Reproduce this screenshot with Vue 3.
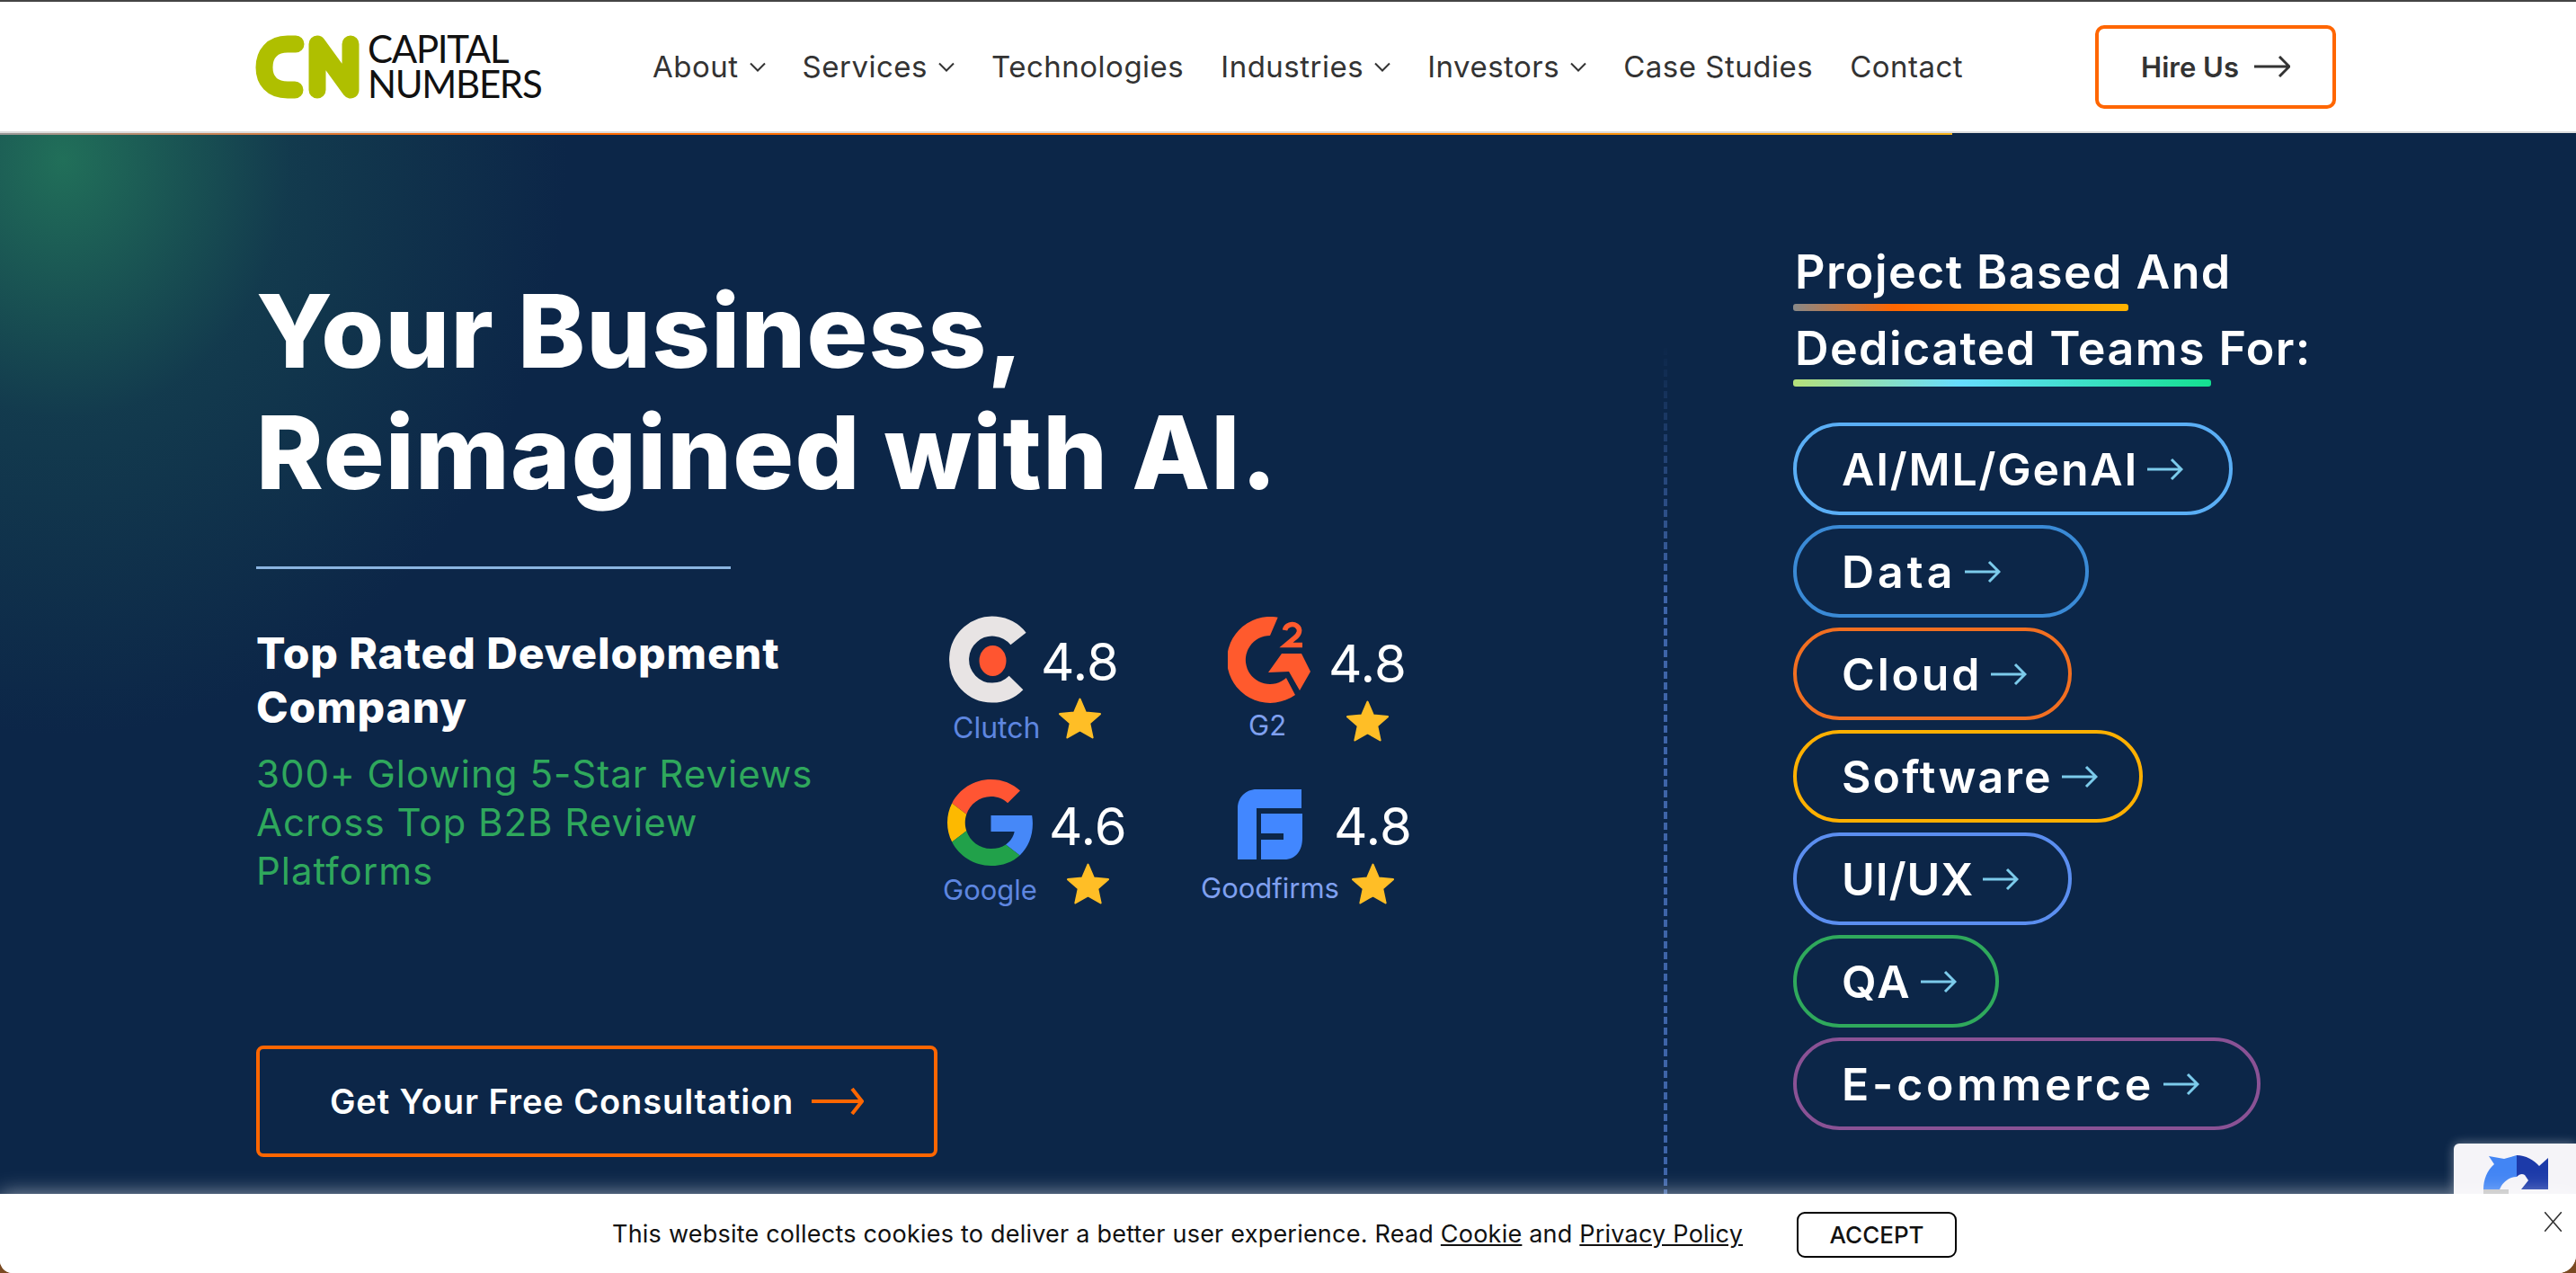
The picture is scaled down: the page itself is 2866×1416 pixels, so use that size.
<template>
  <div class="page">
    <header class="header">
      <a class="logo">
        <svg class="logo-mark" viewBox="0 0 116 71" width="116" height="71" aria-hidden="true">
          <path d="M45 10H36C18 10 10 22 10 36S18 61 36 61H44" fill="none" stroke="#afbf00" stroke-width="19" stroke-linecap="round" />
          <path d="M69 61V10L106 61V10" fill="none" stroke="#afbf00" stroke-width="19" stroke-linecap="round" stroke-linejoin="round" />
        </svg>
        <div class="logo-text">
          <span>CAPITAL</span>
          <span>NUMBERS</span>
        </div>
      </a>
      <nav class="nav">
        <a v-for="item in navItems" :key="item.name" class="nav-item">
          {{ item.name }}
          <svg v-if="item.menu" viewBox="0 0 18 11" width="18" height="11" aria-hidden="true">
            <path d="M1 1.5L9 9.5L17 1.5" fill="none" stroke="#333" stroke-width="2" />
          </svg>
        </a>
      </nav>
      <a class="hire">
        Hire Us
        <svg viewBox="0 0 40 24" width="40" height="24" aria-hidden="true">
          <path d="M0 12H38M28 1L39 12L28 23" fill="none" stroke="#333" stroke-width="3" />
        </svg>
      </a>
    </header>

    <main class="hero">
      <div class="progress"></div>
      <section class="left">
        <h1>Your Business,<br />Reimagined with AI.</h1>
        <div class="rule"></div>
        <div class="proof">
          <div class="proof-text">
            <h2>Top Rated Development Company</h2>
            <p>300+ Glowing 5-Star Reviews<br />Across Top B2B Review<br />Platforms</p>
          </div>
          <div class="ratings">
            <div v-for="r in ratings" :key="r.name" class="rating" :class="'r-' + r.key">
              <div class="brand">
                <svg v-if="r.key === 'clutch'" class="mark" viewBox="0 0 89 97" width="89" height="97" aria-hidden="true">
                  <path d="M77 25.5A37 37 0 1 0 74.5 74.5" fill="none" stroke="#e8e4e4" stroke-width="22" />
                  <ellipse cx="48.5" cy="50" rx="15" ry="17" fill="#ff5530" />
                </svg>
                <svg v-else-if="r.key === 'g2'" class="mark" viewBox="0 0 92 96" width="92" height="96" aria-hidden="true">
                  <path d="M55.7 .7A48 48 0 1 0 75 87L65 68A27 27 0 1 1 47 21Z" fill="#ff5a2d" />
                  <path d="M63.5 15C64.500 9 72 7 76.500 10C82 14 79.500 20 74 24L65 31.500H83" fill="none" stroke="#ff5a2d" stroke-width="5.500" />
                  <path d="M45 62L60 41H82L92 61L80 82L68 61Z" fill="#ff5a2d" />
                </svg>
                <svg v-else-if="r.key === 'google'" class="mark" viewBox="0 0 48 48" width="97" height="96" preserveAspectRatio="none" aria-hidden="true">
                  <path fill="#ff5533" d="M24 9.5c3.54 0 6.71 1.22 9.21 3.6l6.85-6.85C35.9 2.38 30.47 0 24 0 14.62 0 6.51 5.38 2.56 13.22l7.98 6.19C12.43 13.72 17.74 9.5 24 9.5z" />
                  <path fill="#4688f8" d="M46.98 24.55c0-1.57-.15-3.09-.38-4.55H24v9.02h12.94c-.58 2.96-2.26 5.48-4.78 7.18l7.73 6c4.51-4.18 7.09-10.36 7.09-17.65z" />
                  <path fill="#fdb900" d="M10.53 28.59c-.48-1.45-.76-2.99-.76-4.59s.27-3.14.76-4.59l-7.98-6.19C.92 16.46 0 20.12 0 24c0 3.88.92 7.54 2.56 10.78l7.97-6.19z" />
                  <path fill="#21a14a" d="M24 48c6.48 0 11.93-2.13 15.89-5.81l-7.73-6c-2.15 1.45-4.92 2.3-8.16 2.3-6.26 0-11.57-4.22-13.47-9.91l-7.98 6.19C6.51 42.62 14.62 48 24 48z" />
                </svg>
                <svg v-else class="mark" viewBox="0 0 72 78" width="72" height="78" aria-hidden="true">
                  <path d="M0 78V21C0 9 9 0 21 0H71V21H21V78Z" fill="#4287ff" />
                  <path d="M26 27H72V54C72 68 65 78 52 78H26V56H51V49H26Z" fill="#4287ff" />
                </svg>
                <span class="brand-name">{{ r.name }}</span>
              </div>
              <div class="score">
                <span class="num">{{ r.score }}</span>
                <svg class="star" viewBox="1 1.500 22 21" width="47" height="46" aria-hidden="true">
                  <path d="M12 2L15 9L22.500 9.700L17 14.600L18.600 22L12 18.200L5.400 22L7 14.600L1.500 9.700L9 9Z" fill="#ffbe26" stroke="#ffbe26" stroke-width="1" stroke-linejoin="round" />
                </svg>
              </div>
            </div>
          </div>
        </div>
        <a class="cta">
          Get Your Free Consultation
          <svg viewBox="0 0 58 30" width="58" height="30" aria-hidden="true">
            <path d="M0 15H56M45 1L56 15L45 29" fill="none" stroke="#ff6600" stroke-width="4" />
          </svg>
        </a>
      </section>

      <div class="dash"></div>

      <section class="right">
        <div class="team-title">Project Based And</div>
        <div class="bar bar-warm"></div>
        <div class="team-title second">Dedicated Teams For:</div>
        <div class="bar bar-cool"></div>
        <ul class="pills">
          <li
            v-for="pill in pills"
            :key="pill.name"
            class="pill"
            :style="{ width: pill.width + 'px', borderColor: pill.color, letterSpacing: pill.track + 'px' }"
          >
            {{ pill.name }}
            <svg viewBox="0 0 40 26" width="40" height="26" aria-hidden="true">
              <path d="M0 13H38M27 2L38 13L27 24" fill="none" stroke="#7ccbeb" stroke-width="3" />
            </svg>
          </li>
        </ul>
      </section>

      <div class="recaptcha">
        <svg viewBox="0 0 74 44" width="74" height="44" aria-hidden="true">
          <path d="M0 38C0 27 4 17 12 10L6 1L23 4L37 0V24C30 24 24 28 20 34L18 38Z" fill="#4285f4" />
          <path d="M37 0C47 0 56 5 62 12L72 3V38H42L50 28L46 22C43 20 40 21 37 24Z" fill="#1c3aa9" />
          <rect y="38" width="28" height="6" fill="#c4c4c4" />
        </svg>
      </div>
    </main>

    <footer class="cookie">
      <p>
        This website collects cookies to deliver a better user experience. Read
        <a>Cookie</a> and <a>Privacy Policy</a>
      </p>
      <button class="accept">ACCEPT</button>
      <svg class="close" viewBox="0 0 19 22" width="19" height="22" aria-hidden="true">
        <path d="M0 0L19 22M19 0L0 22" fill="none" stroke="#333" stroke-width="1.500" />
      </svg>
    </footer>
  </div>
</template>

<script setup>
const navItems = [
  { name: "About", menu: true },
  { name: "Services", menu: true },
  { name: "Technologies", menu: false },
  { name: "Industries", menu: true },
  { name: "Investors", menu: true },
  { name: "Case Studies", menu: false },
  { name: "Contact", menu: false },
];

const ratings = [
  { key: "clutch", name: "Clutch", score: "4.8" },
  { key: "g2", name: "G2", score: "4.8" },
  { key: "google", name: "Google", score: "4.6" },
  { key: "goodfirms", name: "Goodfirms", score: "4.8" },
];

const pills = [
  { name: "AI/ML/GenAI", width: 489, color: "#5aaef5", track: 1.8 },
  { name: "Data", width: 329, color: "#3a8ad6", track: 4 },
  { name: "Cloud", width: 310, color: "#f26f21", track: 2.8 },
  { name: "Software", width: 389, color: "#ffb000", track: 2.1 },
  { name: "UI/UX", width: 310, color: "#5b8ef0", track: 1 },
  { name: "QA", width: 229, color: "#2fa95c", track: 2.5 },
  { name: "E-commerce", width: 520, color: "#8a5295", track: 3.8 },
];
</script>

<style>
html,
body {
  margin: 0;
  background: #7a4a22;
}
</style>

<style scoped>
.page {
  width: 2866px;
  height: 1416px;
  display: flex;
  flex-direction: column;
  overflow: hidden;
  border-radius: 0 0 20px 14px;
  background: #fff;
  font-family: Inter, "Liberation Sans", sans-serif;
}

.header {
  height: 148px;
  box-sizing: border-box;
  flex-shrink: 0;
  display: flex;
  align-items: center;
  padding: 0 267px 0 284px;
  background: #fff;
  border-top: 2px solid #444;
  border-bottom: 2px solid #ddd;
}

.logo {
  width: 319px;
  flex-shrink: 0;
  display: flex;
  align-items: center;
  gap: 9px;
}

.logo-mark {
  flex-shrink: 0;
}

.logo-text {
  display: flex;
  flex-direction: column;
  font-family: Lato, sans-serif;
  font-size: 42px;
  letter-spacing: -1.3px;
  line-height: 39px;
  color: #111;
}

.nav {
  display: flex;
  align-items: center;
  gap: 41px;
  margin-left: 123px;
  font-size: 33px;
  letter-spacing: 0.5px;
  color: #333;
}

.nav-item {
  display: flex;
  align-items: center;
  gap: 12px;
}

.hire {
  margin-left: auto;
  width: 268px;
  height: 93px;
  box-sizing: border-box;
  display: flex;
  align-items: center;
  justify-content: center;
  gap: 17px;
  border: 4px solid #ff6600;
  border-radius: 10px;
  font-size: 31px;
  font-weight: 600;
  color: #333;
}

.hero {
  position: relative;
  flex: 1;
  min-height: 0;
  display: flex;
  background:
    radial-gradient(ellipse 560px 640px at 70px 30px, rgba(34, 115, 90, 0.95), rgba(24, 75, 82, 0.55) 45%, rgba(12, 38, 72, 0) 100%),
    #0c2648;
  color: #fff;
}

.progress {
  position: absolute;
  left: 0;
  top: 0;
  width: 2172px;
  height: 2px;
  background: linear-gradient(90deg, #999 0%, #ff6600 25%, #ff7a00 70%, #f5b21a 100%);
}

.left {
  width: 1851px;
  flex-shrink: 0;
  box-sizing: border-box;
  padding: 153px 0 0 285px;
}

h1 {
  margin: 0;
  font-size: 113px;
  line-height: 135px;
  font-weight: 800;
  letter-spacing: 1.2px;
}

.rule {
  width: 528px;
  height: 3px;
  margin-top: 59px;
  background: #8ab4e0;
}

.proof {
  display: flex;
  margin-top: 52px;
}

.proof-text {
  width: 764px;
  flex-shrink: 0;
  padding-top: 12px;
}

h2 {
  width: 640px;
  margin: 0;
  font-size: 48px;
  line-height: 60px;
  font-weight: 800;
  letter-spacing: 0.9px;
}

.proof-text p {
  margin: 17px 0 0;
  font-size: 42px;
  line-height: 54px;
  letter-spacing: 1px;
  color: #2fa85c;
}

.ratings {
  display: grid;
  grid-template-columns: 287px 200px;
  grid-auto-rows: 182px;
}

.rating {
  display: flex;
  align-items: flex-start;
}

.brand {
  display: flex;
  flex-direction: column;
  flex-shrink: 0;
}

.brand-name {
  font-size: 31px;
  line-height: 40px;
  white-space: nowrap;
}

.score {
  display: flex;
  flex-direction: column;
  align-items: center;
}

.num {
  font-size: 58px;
  line-height: 60px;
}

.r-clutch .brand { width: 109px; }
.r-clutch .mark { margin-left: 7px; }
.r-clutch .brand-name { margin: 8px 0 0 11px; font-size: 32px; color: #5e86e0; }
.r-clutch .score { margin-top: 21px; }
.r-clutch .star { margin-top: 10px; }

.r-g2 .brand { width: 142px; }
.r-g2 .mark { margin: 1px 0 0 30px; }
.r-g2 .brand-name { margin: 5px 0 0 53px; color: #7fa0f0; }
.r-g2 .score { margin-top: 23px; }
.r-g2 .star { margin-top: 11px; }

.r-google .brand { width: 118px; }
.r-google .mark { margin-left: 5px; }
.r-google .brand-name { margin-top: 7px; color: #5e86e0; }
.r-google .score { margin-top: 22px; }
.r-google .star { margin-top: 11px; }

.r-goodfirms .brand { width: 148px; }
.r-goodfirms .mark { margin: 11px 0 0 41px; }
.r-goodfirms .brand-name { margin-top: 12px; color: #7fa0f0; }
.r-goodfirms .score { margin-top: 22px; }
.r-goodfirms .star { margin-top: 11px; }

.cta {
  width: 758px;
  height: 124px;
  box-sizing: border-box;
  display: flex;
  align-items: center;
  gap: 20px;
  margin-top: 114px;
  padding-left: 78px;
  border: 4px solid #ff6600;
  border-radius: 8px;
  font-size: 38px;
  font-weight: 600;
  letter-spacing: 0.9px;
}

.dash {
  width: 4px;
  flex-shrink: 0;
  margin-top: 235px;
  background:
    repeating-linear-gradient(180deg, #0c2648 0 4px, transparent 4px 12px),
    linear-gradient(180deg, #0c2648, #3e64a8 30%);
}

.right {
  margin-left: 140px;
  padding-top: 125px;
}

.team-title {
  font-size: 52px;
  line-height: 60px;
  font-weight: 600;
  letter-spacing: 1.4px;
  padding-left: 2px;
  white-space: nowrap;
}

.team-title.second {
  margin-top: 12px;
}

.bar {
  height: 8px;
  margin-top: 5px;
  border-radius: 3px;
}

.bar-warm {
  width: 373px;
  background: linear-gradient(90deg, #888 0%, #ff6600 30%, #ffb300 100%);
}

.bar-cool {
  width: 465px;
  margin-top: 4px;
  background: linear-gradient(90deg, #b5e07a 0%, #66ddff 40%, #14e090 100%);
}

.pills {
  list-style: none;
  margin: 40px 0 0;
  padding: 0;
  display: flex;
  flex-direction: column;
  gap: 11px;
}

.pill {
  height: 103px;
  box-sizing: border-box;
  display: flex;
  align-items: center;
  gap: 10px;
  padding-left: 50px;
  border: 4px solid;
  border-radius: 52px;
  font-size: 50px;
  font-weight: 600;
}

.recaptcha {
  position: absolute;
  right: 0;
  bottom: 0;
  width: 136px;
  height: 56px;
  box-sizing: border-box;
  padding: 13px 0 0 33px;
  background: #f5f4f8;
  border-radius: 6px 0 0 0;
  box-shadow: 0 0 12px rgba(255, 255, 255, 0.4);
  overflow: hidden;
}

.recaptcha svg {
  display: block;
}

.cookie {
  position: relative;
  height: 88px;
  flex-shrink: 0;
  box-sizing: border-box;
  display: flex;
  align-items: center;
  padding-left: 681px;
  background: #fff;
  box-shadow: 0 0 22px rgba(255, 255, 255, 0.55);
  color: #111;
  font-size: 27px;
  letter-spacing: 0.22px;
}

.cookie p {
  margin: 0;
  white-space: nowrap;
}

.cookie a {
  text-decoration: underline;
}

.accept {
  width: 178px;
  height: 51px;
  margin: 3px 0 0 60px;
  background: #fff;
  border: 2px solid #000;
  border-radius: 9px;
  color: #111;
  font-family: inherit;
  font-size: 26px;
  font-weight: 500;
}

.close {
  position: absolute;
  right: 16px;
  top: 20px;
}
</style>
